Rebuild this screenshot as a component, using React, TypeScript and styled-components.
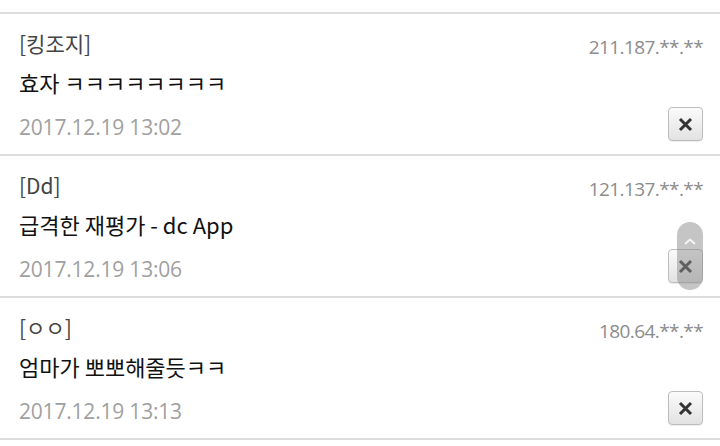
import styled, { createGlobalStyle } from 'styled-components';

const GlobalStyle = createGlobalStyle`
  html, body {
    margin: 0;
    padding: 0;
    background: #fff;
  }
  body {
    font-family: "Noto Sans CJK KR", "Noto Sans", sans-serif;
    overflow: hidden;
  }
`;

const Page = styled.div`
  position: relative;
  width: 720px;
  height: 446px;
  padding-top: 12px;
  box-sizing: border-box;
`;

const List = styled.ul`
  list-style: none;
  margin: 0;
  padding: 0;
  border-bottom: 2px solid #dcdcdc;
`;

const Item = styled.li`
  display: grid;
  grid-template-columns: 1fr auto;
  grid-template-rows: 34px 44px 46px;
  height: 142px;
  box-sizing: border-box;
  padding: 12px 17px 0 19px;
  border-top: 2px solid #dcdcdc;
`;

const Name = styled.div`
  font-size: 21px;
  line-height: 34px;
  color: #444;
  align-self: start;
`;

const Ip = styled.div`
  font-family: "Open Sans", sans-serif;
  font-size: 19px;
  letter-spacing: -0.6px;
  color: #8c8c8c;
  line-height: 34px;
  margin-top: 4px;
  text-align: right;
`;

const Title = styled.div`
  grid-column: 1 / 3;
  font-size: 22px;
  line-height: 44px;
  color: #111;
`;

const Date = styled.div`
  font-family: "Open Sans", sans-serif;
  font-size: 21px;
  letter-spacing: -0.2px;
  color: #a0a0a0;
  line-height: 46px;
`;

const DeleteButton = styled.button`
  justify-self: end;
  width: 35px;
  height: 34px;
  margin-top: 3px;
  padding: 0;
  display: flex;
  align-items: center;
  justify-content: center;
  border: 1px solid #bdbdbd;
  border-radius: 4px;
  background: linear-gradient(#fbfbfb, #e2e2e2);
  box-shadow: 0 1px 1px rgba(0, 0, 0, 0.08);
`;

const ScrollThumb = styled.div`
  position: absolute;
  left: 677px;
  top: 222px;
  width: 26px;
  height: 68px;
  border-radius: 13px;
  background: rgba(140, 140, 140, 0.5);
  display: flex;
  justify-content: center;
  padding-top: 16px;
  box-sizing: border-box;
`;

const comments = [
  { name: '[킹조지]', ip: '211.187.**.**', title: '효자 ㅋㅋㅋㅋㅋㅋㅋㅋ', date: '2017.12.19 13:02' },
  { name: '[Dd]', ip: '121.137.**.**', title: '급격한 재평가 - dc App', date: '2017.12.19 13:06' },
  { name: '[ㅇㅇ]', ip: '180.64.**.**', title: '엄마가 뽀뽀해줄듯ㅋㅋ', date: '2017.12.19 13:13' },
];

function CloseIcon() {
  return (
    <svg width="15" height="15" viewBox="0 0 15 15">
      <path d="M2 2 L13 13 M13 2 L2 13" stroke="#333" strokeWidth="3" />
    </svg>
  );
}

export default function App() {
  return (
    <>
      <GlobalStyle />
      <Page>
        <List>
          {comments.map((c) => (
            <Item key={c.date}>
              <Name>{c.name}</Name>
              <Ip>{c.ip}</Ip>
              <Title>{c.title}</Title>
              <Date>{c.date}</Date>
              <DeleteButton>
                <CloseIcon />
              </DeleteButton>
            </Item>
          ))}
        </List>
        <ScrollThumb>
          <svg width="12" height="7" viewBox="0 0 12 7">
            <path d="M1 6 L6 1.5 L11 6" stroke="#f4f4f4" strokeWidth="2" fill="none" />
          </svg>
        </ScrollThumb>
      </Page>
    </>
  );
}
